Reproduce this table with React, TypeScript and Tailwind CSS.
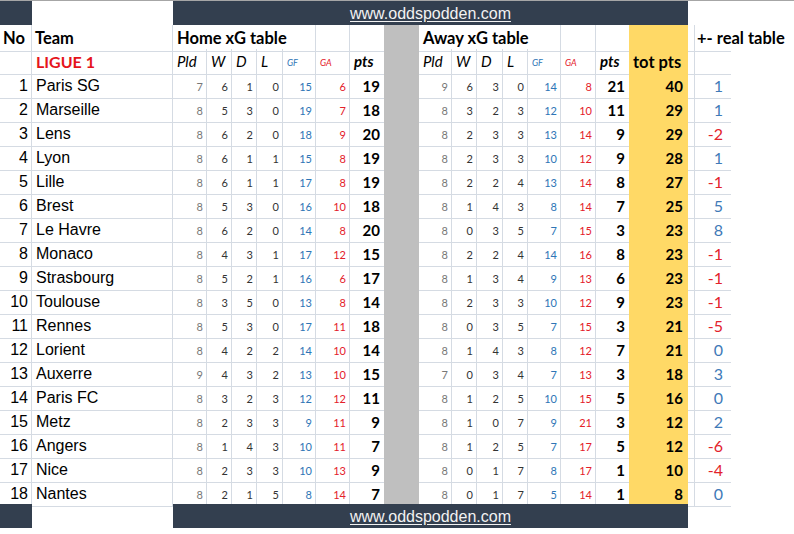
import React from 'react';

type Side = [number, number, number, number, number, number, number];
type Row = { team: string; home: Side; away: Side; tot: number; diff: number };

const rows: Row[] = [
  { team: 'Paris SG', home: [7, 6, 1, 0, 15, 6, 19], away: [9, 6, 3, 0, 14, 8, 21], tot: 40, diff: 1 },
  { team: 'Marseille', home: [8, 5, 3, 0, 19, 7, 18], away: [8, 3, 2, 3, 12, 10, 11], tot: 29, diff: 1 },
  { team: 'Lens', home: [8, 6, 2, 0, 18, 9, 20], away: [8, 2, 3, 3, 13, 14, 9], tot: 29, diff: -2 },
  { team: 'Lyon', home: [8, 6, 1, 1, 15, 8, 19], away: [8, 2, 3, 3, 10, 12, 9], tot: 28, diff: 1 },
  { team: 'Lille', home: [8, 6, 1, 1, 17, 8, 19], away: [8, 2, 2, 4, 13, 14, 8], tot: 27, diff: -1 },
  { team: 'Brest', home: [8, 5, 3, 0, 16, 10, 18], away: [8, 1, 4, 3, 8, 14, 7], tot: 25, diff: 5 },
  { team: 'Le Havre', home: [8, 6, 2, 0, 14, 8, 20], away: [8, 0, 3, 5, 7, 15, 3], tot: 23, diff: 8 },
  { team: 'Monaco', home: [8, 4, 3, 1, 17, 12, 15], away: [8, 2, 2, 4, 14, 16, 8], tot: 23, diff: -1 },
  { team: 'Strasbourg', home: [8, 5, 2, 1, 16, 6, 17], away: [8, 1, 3, 4, 9, 13, 6], tot: 23, diff: -1 },
  { team: 'Toulouse', home: [8, 3, 5, 0, 13, 8, 14], away: [8, 2, 3, 3, 10, 12, 9], tot: 23, diff: -1 },
  { team: 'Rennes', home: [8, 5, 3, 0, 17, 11, 18], away: [8, 0, 3, 5, 7, 15, 3], tot: 21, diff: -5 },
  { team: 'Lorient', home: [8, 4, 2, 2, 14, 10, 14], away: [8, 1, 4, 3, 8, 12, 7], tot: 21, diff: 0 },
  { team: 'Auxerre', home: [9, 4, 3, 2, 13, 10, 15], away: [7, 0, 3, 4, 7, 13, 3], tot: 18, diff: 3 },
  { team: 'Paris FC', home: [8, 3, 2, 3, 12, 12, 11], away: [8, 1, 2, 5, 10, 15, 5], tot: 16, diff: 0 },
  { team: 'Metz', home: [8, 2, 3, 3, 9, 11, 9], away: [8, 1, 0, 7, 9, 21, 3], tot: 12, diff: 2 },
  { team: 'Angers', home: [8, 1, 4, 3, 10, 11, 7], away: [8, 1, 2, 5, 7, 17, 5], tot: 12, diff: -6 },
  { team: 'Nice', home: [8, 2, 3, 3, 10, 13, 9], away: [8, 0, 1, 7, 8, 17, 1], tot: 10, diff: -4 },
  { team: 'Nantes', home: [8, 2, 1, 5, 8, 14, 7], away: [8, 0, 1, 7, 5, 14, 1], tot: 8, diff: 0 },
];

// excel-ish column widths: No, Team, Pld W D L GF GA pts, gap, Pld W D L GF GA pts, tot, narrow, +-, rest
const cols =
  'grid grid-cols-[32px_141px_34px_25px_25px_26px_33px_34px_34px_35px_33px_25px_26px_25px_33px_35px_33px_59px_7px_36px_1fr]';

const line = 'border-r border-b border-[#d5dbe3]';
const lineB = 'border-b border-[#d5dbe3]';
const calibri = "font-['Lato',sans-serif]";
const arial = "font-['Liberation_Sans',Arial,sans-serif]";

function SideCells({ s }: { s: Side }) {
  const [pld, w, d, l, gf, ga, pts] = s;
  const small = `${line} flex items-center justify-end pr-[3px] pt-[4px] text-[11px] ${calibri}`;
  return (
    <>
      <div className={`${small} text-[#777]`}>{pld}</div>
      <div className={`${small} text-[#333]`}>{w}</div>
      <div className={`${small} text-[#333]`}>{d}</div>
      <div className={`${small} text-[#333]`}>{l}</div>
      <div className={`${small} text-[#2e75b6]`}>{gf}</div>
      <div className={`${small} text-[#e4202a]`}>{ga}</div>
      <div className={`${lineB} flex items-center justify-end pr-[4px] pt-[2px] text-[15px] font-bold text-black ${calibri}`}>
        {pts}
      </div>
    </>
  );
}

function SubHeader() {
  const it = `${line} flex items-center pl-[4px] text-[15px] italic text-black ${calibri}`;
  const tiny = `${line} flex items-center pl-[4px] pt-[2px] text-[9px] italic ${calibri}`;
  return (
    <>
      <div className={it}>Pld</div>
      <div className={it}>W</div>
      <div className={it}>D</div>
      <div className={it}>L</div>
      <div className={`${tiny} text-[#2e75b6]`}>GF</div>
      <div className={`${tiny} text-[#e4202a]`}>GA</div>
      <div className={`${lineB} flex items-center pl-[4px] text-[15px] font-bold italic ${calibri}`}>pts</div>
    </>
  );
}

function Banner() {
  return (
    <div className={`${cols} h-6`}>
      <div className="bg-[#333f4f]" />
      <div />
      <div className="col-span-16 flex items-center justify-center pt-px bg-[#333f4f]">
        <span className={`${arial} text-[16px] leading-none text-[#f2f2f2] underline underline-offset-2`}>
          www.oddspodden.com
        </span>
      </div>
      <div className="col-span-3" />
    </div>
  );
}

export default function App() {
  const head = `text-[16.5px] font-bold text-black ${calibri}`;
  return (
    <div className="h-[534px] w-[794px] overflow-hidden bg-white">
      <div className="h-px bg-[#a6a6a6]" />
      <Banner />

      {/* header row */}
      <div className={`${cols} h-6`}>
        <div className={`${line} ${head} flex items-center pl-[3px] pt-px`}>No</div>
        <div className={`${line} ${head} flex items-center pl-[3px] pt-px`}>Team</div>
        <div className={`${line} ${head} col-span-5 flex items-center pl-[4px] pt-px`}>Home xG table</div>
        <div className={line} />
        <div className={lineB} />
        <div className="bg-[#bfbfbf]" />
        <div className={`${line} ${head} col-span-5 flex items-center pl-[4px] pt-px`}>Away xG table</div>
        <div className={line} />
        <div className={lineB} />
        <div className="bg-[#ffd966]" />
        <div className={line} />
        <div className={`${lineB} ${head} flex items-center whitespace-nowrap pl-[2px] pt-px`}>+- real table</div>
        <div />
      </div>

      {/* sub header */}
      <div className={`${cols} h-[23px]`}>
        <div className={line} />
        <div className={`${line} flex items-center pl-[4px] pt-px text-[16px] font-bold text-[#e5141c] ${calibri}`}>
          LIGUE 1
        </div>
        <SubHeader />
        <div className="bg-[#bfbfbf]" />
        <SubHeader />
        <div className={`bg-[#ffd966] flex items-center pl-[4px] ${head}`}>tot pts</div>
        <div className={line} />
        <div className={lineB} />
        <div />
      </div>

      {rows.map((r, i) => (
        <div key={r.team} className={`${cols} h-6`}>
          <div className={`${line} ${arial} flex items-center justify-end pr-[3px] pt-[2px] text-[16px] text-black`}>
            {i + 1}
          </div>
          <div className={`${line} ${arial} flex items-center pl-[4px] pt-[2px] text-[16px] text-black`}>{r.team}</div>
          <SideCells s={r.home} />
          <div className="bg-[#bfbfbf]" />
          <SideCells s={r.away} />
          <div
            className={`bg-[#ffd966] flex items-center justify-end pr-[5px] pt-[2px] text-[15px] font-bold text-black ${calibri}`}
          >
            {r.tot}
          </div>
          <div className={line} />
          <div
            className={`${lineB} ${calibri} flex items-center justify-end pr-[8px] pt-[2px] text-[16px] ${
              r.diff < 0 ? 'text-[#e3222b]' : 'text-[#3f7ab8]'
            }`}
          >
            {r.diff}
          </div>
          <div />
        </div>
      ))}

      <Banner />
    </div>
  );
}
